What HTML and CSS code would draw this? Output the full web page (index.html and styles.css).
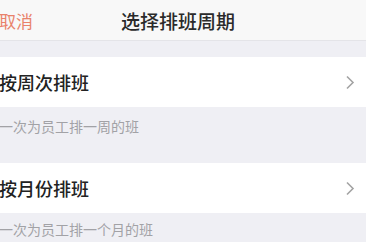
FILE: index.html
```html
<!DOCTYPE html>
<html lang="zh-CN">
<head>
<meta charset="utf-8">
<link rel="stylesheet" href="styles.css">
</head>
<body>
<header class="nav">
  <span class="cancel">取消</span>
  <span class="title">选择排班周期</span>
  <span class="spacer"></span>
</header>
<div class="gap"></div>
<div class="row">
  <span class="row-title">按周次排班</span>
  <svg class="chev" width="10" height="15" viewBox="0 0 10 15"><path d="M2 1.5 L8 7.5 L2 13.5" fill="none" stroke="#a3a3a3" stroke-width="1.6"/></svg>
</div>
<p class="desc desc-1">一次为员工排一周的班</p>
<div class="row">
  <span class="row-title">按月份排班</span>
  <svg class="chev" width="10" height="15" viewBox="0 0 10 15"><path d="M2 1.5 L8 7.5 L2 13.5" fill="none" stroke="#a3a3a3" stroke-width="1.6"/></svg>
</div>
<p class="desc desc-2">一次为员工排一个月的班</p>
<div class="row row-next"></div>
</body>
</html>
```
FILE: styles.css
```css
html, body {
  margin: 0;
  padding: 0;
}
body {
  width: 366px;
  height: 242px;
  overflow: hidden;
  background: #efeff4;
  font-family: "Noto Sans CJK SC", "Noto Sans", sans-serif;
}
.nav {
  height: 41px;
  box-sizing: border-box;
  background: #f8f8f8;
  border-bottom: 1px solid #e4e4e8;
  display: grid;
  grid-template-columns: 1fr auto 1fr;
  align-items: center;
  padding-right: 10px;
}
.cancel {
  color: #e9826b;
  font-size: 17px;
  margin-left: -1px;
}
.title {
  color: #2a2a2a;
  font-size: 19px;
  font-weight: 500;
}
.gap {
  height: 16px;
}
.row {
  height: 50px;
  background: #fff;
  display: flex;
  align-items: center;
  justify-content: space-between;
  padding-right: 11px;
}
.row-title {
  font-size: 18px;
  color: #222;
  font-weight: 500;
  margin-left: -1px;
}
.chev {
  display: block;
}
.desc {
  margin: 0;
  font-size: 14px;
  line-height: 20px;
  color: #a2a2a6;
  margin-left: -1px;
}
.desc-1 {
  padding: 9px 0 27px;
}
.desc-2 {
  padding: 6px 0 5px;
}
.row-next {
  height: 10px;
}
```
